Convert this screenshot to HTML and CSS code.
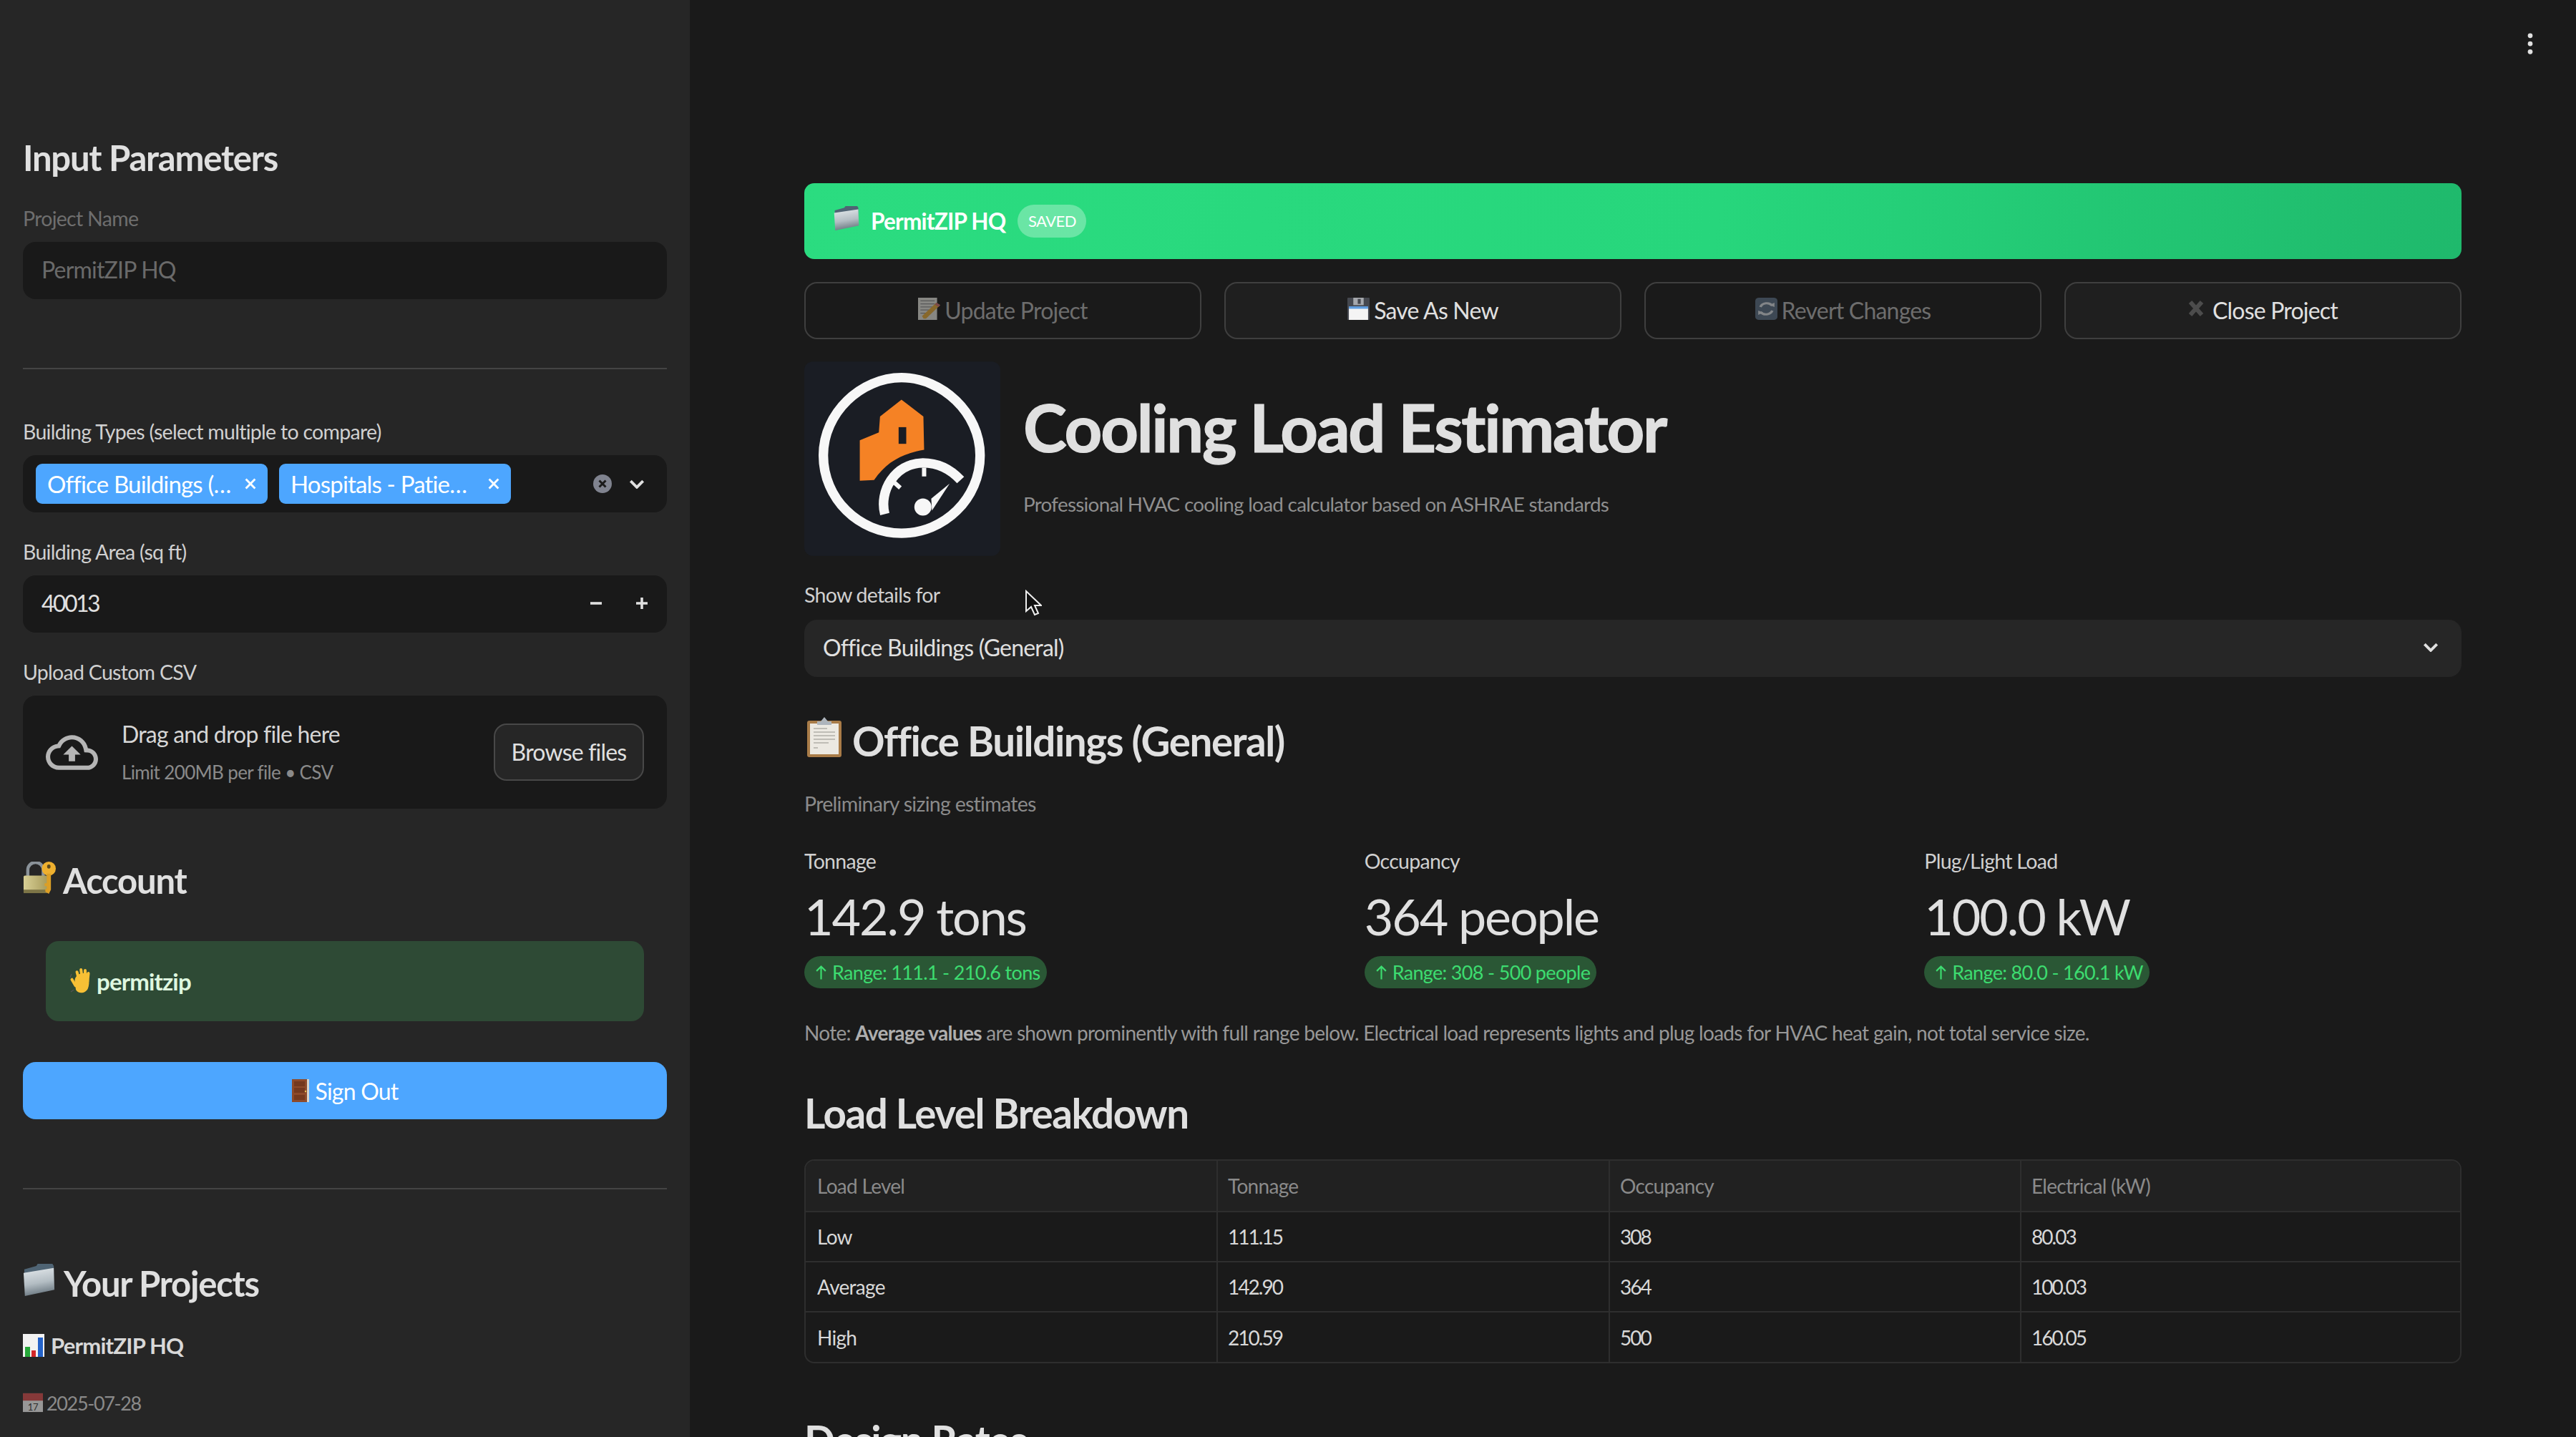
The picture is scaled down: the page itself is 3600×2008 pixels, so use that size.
FILE: index.html
```html
<!DOCTYPE html>
<html lang="en">
<head>
    <meta charset="UTF-8">
    <title>Cooling Load Estimator</title>
    <link rel="stylesheet" href="styles.css">
</head>
<body>
    <!-- emoji drawings -->
    <svg class="defs" width="0" height="0">
        <linearGradient id="folder-face" x1="0" y1="0" x2="0.2" y2="1">
            <stop offset="0" stop-color="#e4e9ec"/>
            <stop offset="0.6" stop-color="#b3bdc3"/>
            <stop offset="1" stop-color="#6f7c85"/>
        </linearGradient>
        <linearGradient id="lock-body" x1="0" y1="0" x2="1" y2="0">
            <stop offset="0" stop-color="#d8cf95"/>
            <stop offset="1" stop-color="#a89c5c"/>
        </linearGradient>
        <symbol id="e-folder" viewBox="0 0 48 46" preserveAspectRatio="none">
            <path d="M2 8 L20 3 L22 0 L44 0 L46 3 L46 34 L4 42 Z" fill="#4f6474"/>
            <path d="M1 13 L46 6 L47 37 L3 46 Z" fill="url(#folder-face)"/>
        </symbol>
        <symbol id="e-lock" viewBox="0 0 48 46" preserveAspectRatio="none">
            <path d="M7 22 V12 A11 11 0 0 1 29 12 V22" fill="none" stroke="#8a9299" stroke-width="4.5"/>
            <rect x="1" y="20" width="34" height="25" rx="2" fill="url(#lock-body)"/>
            <rect x="1" y="40" width="34" height="5" fill="#7d7547"/>
            <circle cx="37" cy="10" r="10" fill="#eeb02f"/>
            <ellipse cx="37" cy="7" rx="2.5" ry="3" fill="#5e4a1c"/>
            <path d="M34 17 H40 V40 L37 46 L32 43 V39 H34 V35 H31 V31 H34 Z" fill="#dc9f26"/>
        </symbol>
        <symbol id="e-wave" viewBox="0 0 32 36">
            <g fill="#f7c035">
                <path d="M8 22 C6 14 10 10 14 8 L24 6 C27 10 29 20 26 28 C23 35 13 37 9 30 Z"/>
                <rect x="10" y="3" width="4" height="16" rx="2" transform="rotate(-14 12 11)"/>
                <rect x="15" y="0" width="4" height="16" rx="2" transform="rotate(-8 17 8)"/>
                <rect x="20" y="1" width="4" height="16" rx="2"/>
                <rect x="24" y="5" width="4" height="15" rx="2" transform="rotate(6 26 12)"/>
                <rect x="4" y="13" width="4" height="14" rx="2" transform="rotate(-30 6 20)"/>
            </g>
            <path d="M3 8 L1 13 M6 30 L2 33" stroke="#555" stroke-width="1.2" fill="none"/>
        </symbol>
        <symbol id="e-door" viewBox="0 0 24 32" preserveAspectRatio="none">
            <rect x="0" y="0" width="24" height="32" fill="#8d4a2a"/>
            <rect x="21" y="0" width="3" height="32" fill="#d9d4c8"/>
            <rect x="3" y="3" width="15" height="7" fill="#74391e"/>
            <rect x="3" y="12" width="15" height="7" fill="#74391e"/>
            <rect x="3" y="22" width="15" height="7" fill="#74391e"/>
            <circle cx="19" cy="17" r="1.2" fill="#e6c25a"/>
        </symbol>
        <symbol id="e-chart" viewBox="0 0 30 32" preserveAspectRatio="none">
            <rect width="30" height="32" fill="#f2f2f2"/>
            <rect x="3" y="18" width="7" height="14" fill="#27a83a"/>
            <rect x="12" y="23" width="6" height="9" fill="#d3272a"/>
            <rect x="21" y="5" width="7" height="27" fill="#2463c9"/>
        </symbol>
        <symbol id="e-memo" viewBox="0 0 28 36" preserveAspectRatio="none">
            <rect x="0" y="0" width="24" height="36" fill="#e0e0da"/>
            <path d="M3 5 H21 M3 10 H21 M3 15 H21 M3 20 H14 M3 25 H10" stroke="#8c8c8c" stroke-width="1.4"/>
            <path d="M7 34 L5 30 L23 8 L28 12 L10 34 Z" fill="#e2a83a"/>
            <path d="M23 8 L28 12 L26 15 L21 11 Z" fill="#c96f6f"/>
        </symbol>
        <symbol id="e-floppy" viewBox="0 0 30 36" preserveAspectRatio="none">
            <rect width="30" height="36" rx="1" fill="#45484f"/>
            <rect x="8" y="0" width="14" height="12" fill="#a5a8ad"/>
            <rect x="14" y="2" width="4" height="8" fill="#45484f"/>
            <rect x="2" y="16" width="26" height="20" fill="#f4f4f4"/>
            <rect x="2" y="14" width="26" height="4" fill="#5f9de0"/>
        </symbol>
        <symbol id="e-refresh" viewBox="0 0 30 36" preserveAspectRatio="none">
            <rect width="30" height="36" rx="5" fill="#5b6f85"/>
            <path d="M23 13 A9 9 0 0 0 7 15" fill="none" stroke="#d8dde2" stroke-width="3.5"/>
            <path d="M7 23 A9 9 0 0 0 23 21" fill="none" stroke="#d8dde2" stroke-width="3.5"/>
            <path d="M19 12 L26 15 L26 8 Z M11 24 L4 21 L4 28 Z" fill="#d8dde2"/>
        </symbol>
        <symbol id="e-cross" viewBox="0 0 22 22">
            <path d="M3 2 L19 20 M19 2 L3 20" stroke="#4c4c4c" stroke-width="6"/>
        </symbol>
        <symbol id="e-clip" viewBox="0 0 48 56">
            <rect x="0" y="5" width="48" height="51" rx="3" fill="#a97c48"/>
            <rect x="4" y="9" width="40" height="43" fill="#ece9e2"/>
            <path d="M9 16 H28 M9 21 H39 M9 26 H39 M9 31 H39 M9 36 H30 M9 43 H15" stroke="#b0aea8" stroke-width="1.5"/>
            <path d="M24 0 L29 6 H34 V11 H14 V6 H19 Z" fill="#aeb5bc"/>
        </symbol>
    </svg>

    <aside class="sidebar">
        <h3 class="side-title first">Input Parameters</h3>

        <label class="field-label muted">Project Name</label>
        <div class="input disabled">PermitZIP HQ</div>

        <hr class="side-rule top-rule">

        <label class="field-label rule-next">Building Types (select multiple to compare)</label>
        <div class="input multi">
            <span class="tag"><span class="tag-text">Office Buildings (…</span><svg class="tag-x" viewBox="0 0 10 10"><path d="M1 1 L9 9 M9 1 L1 9"/></svg></span>
            <span class="tag"><span class="tag-text">Hospitals - Patie…</span><svg class="tag-x" viewBox="0 0 10 10"><path d="M1 1 L9 9 M9 1 L1 9"/></svg></span>
            <svg class="clear-icon" viewBox="0 0 26 26"><circle cx="13" cy="13" r="13" fill="#80838f"/><path d="M8.5 8.5 L17.5 17.5 M17.5 8.5 L8.5 17.5" stroke="#1a1a1a" stroke-width="3"/></svg>
            <svg class="chevron" viewBox="0 0 20 12"><path d="M2 2 L10 10 L18 2"/></svg>
        </div>

        <label class="field-label">Building Area (sq ft)</label>
        <div class="input number">
            <span class="number-value">40013</span>
            <svg class="step-icon" viewBox="0 0 18 18"><path d="M1 9 H17"/></svg>
            <svg class="step-icon" viewBox="0 0 18 18"><path d="M1 9 H17 M9 1 V17"/></svg>
        </div>

        <label class="field-label">Upload Custom CSV</label>
        <div class="dropzone">
            <svg class="cloud" viewBox="0 0 24 24"><path d="M19.35 10.04C18.67 6.59 15.64 4 12 4 9.11 4 6.6 5.64 5.35 8.04 2.34 8.36 0 10.91 0 14c0 3.31 2.69 6 6 6h13c2.76 0 5-2.24 5-5 0-2.64-2.05-4.78-4.65-4.96zM19 18H6c-2.21 0-4-1.79-4-4 0-2.05 1.53-3.76 3.56-3.97l1.07-.11.5-.95C8.08 7.14 9.94 6 12 6c2.62 0 4.88 1.86 5.39 4.43l.3 1.5 1.53.11c1.56.1 2.78 1.41 2.78 2.96 0 1.65-1.35 3-3 3zM8 13h2.55v3h2.9v-3H16l-4-4z"/></svg>
            <div class="drop-text">
                <div class="drop-main">Drag and drop file here</div>
                <div class="drop-sub">Limit 200MB per file • CSV</div>
            </div>
            <div class="browse">Browse files</div>
        </div>

        <h3 class="side-title account"><svg class="emoji em-lock"><use href="#e-lock"/></svg>Account</h3>

        <div class="user-box"><svg class="emoji em-wave"><use href="#e-wave"/></svg>permitzip</div>

        <div class="signout"><svg class="emoji em-door"><use href="#e-door"/></svg>Sign Out</div>

        <hr class="side-rule bottom-rule">

        <h3 class="side-title projects"><svg class="emoji em-folder"><use href="#e-folder"/></svg>Your Projects</h3>
        <div class="project-name"><svg class="emoji em-chart"><use href="#e-chart"/></svg>PermitZIP HQ</div>
        <div class="project-date">
            <svg class="emoji em-cal" viewBox="0 0 30 28">
                <rect width="30" height="28" fill="#f4f4f4"/>
                <rect width="30" height="11" fill="#d44a4a"/>
                <text x="15" y="25.5" text-anchor="middle" font-family="Lato" font-size="14" fill="#333">17</text>
            </svg>
            2025-07-28
        </div>
    </aside>

    <main class="main">
        <svg class="kebab" viewBox="0 0 8 32"><circle cx="4" cy="4" r="3.6"/><circle cx="4" cy="16" r="3.6"/><circle cx="4" cy="28" r="3.6"/></svg>
        <svg class="cursor" viewBox="0 0 24 37"><path d="M2 2 L2 30 L9 24 L14 35 L19 33 L14 22 L23 22 Z" fill="#111" stroke="#eee" stroke-width="2"/></svg>

        <div class="banner">
            <svg class="emoji em-bfolder"><use href="#e-folder"/></svg>
            <span class="banner-name">PermitZIP HQ</span>
            <span class="saved">SAVED</span>
        </div>

        <div class="actions">
            <div class="btn off"><svg class="emoji em-btn"><use href="#e-memo"/></svg>Update Project</div>
            <div class="btn"><svg class="emoji em-btn"><use href="#e-floppy"/></svg>Save As New</div>
            <div class="btn off"><svg class="emoji em-btn"><use href="#e-refresh"/></svg>Revert Changes</div>
            <div class="btn"><svg class="emoji em-cross"><use href="#e-cross"/></svg>Close Project</div>
        </div>

        <header class="header">
            <svg class="logo" viewBox="12 15 823 815">
                <rect x="12" y="15" width="823" height="815" rx="36" fill="#1a1d24"/>
                <path d="M420 82 C590 82 750 230 750 408 C750 590 600 735 420 735 C240 735 92 590 92 408 C92 230 250 82 420 82 Z" fill="none" stroke="#f7f7f7" stroke-width="40"/>
                <path d="M245 345 L325 312 L330 245 L420 175 L512 245 L515 385 C430 400 360 430 305 512 L245 515 Z" fill="#f58225"/>
                <rect x="408" y="290" width="32" height="70" fill="#1a1d24"/>
                <path d="M350 655 C325 560 390 442 510 440 C570 440 625 465 668 512" fill="none" stroke="#f7f7f7" stroke-width="40"/>
                <path d="M515 460 V497 M385 518 L415 545" stroke="#f7f7f7" stroke-width="18"/>
                <path d="M545 590 L622 527 L548 640 Z" fill="#f7f7f7"/>
                <circle cx="510" cy="625" r="36" fill="#f7f7f7"/>
            </svg>
            <div class="header-text">
                <h1 class="title">Cooling Load Estimator</h1>
                <p class="subtitle">Professional HVAC cooling load calculator based on ASHRAE standards</p>
            </div>
        </header>

        <label class="details-label">Show details for</label>
        <div class="select">
            <span>Office Buildings (General)</span>
            <svg class="chevron" viewBox="0 0 20 12"><path d="M2 2 L10 10 L18 2"/></svg>
        </div>

        <h2 class="section-title office"><svg class="emoji em-clip"><use href="#e-clip"/></svg>Office Buildings (General)</h2>
        <p class="caption">Preliminary sizing estimates</p>

        <div class="metrics">
            <div class="metric">
                <div class="metric-label">Tonnage</div>
                <div class="metric-value">142.9 tons</div>
                <div class="delta"><svg class="delta-arrow" viewBox="0 0 16 20"><path d="M8 19 V2 M2 8 L8 2 L14 8"/></svg>Range: 111.1 - 210.6 tons</div>
            </div>
            <div class="metric">
                <div class="metric-label">Occupancy</div>
                <div class="metric-value">364 people</div>
                <div class="delta"><svg class="delta-arrow" viewBox="0 0 16 20"><path d="M8 19 V2 M2 8 L8 2 L14 8"/></svg>Range: 308 - 500 people</div>
            </div>
            <div class="metric">
                <div class="metric-label">Plug/Light Load</div>
                <div class="metric-value">100.0 kW</div>
                <div class="delta"><svg class="delta-arrow" viewBox="0 0 16 20"><path d="M8 19 V2 M2 8 L8 2 L14 8"/></svg>Range: 80.0 - 160.1 kW</div>
            </div>
        </div>

        <p class="note">Note: <strong>Average values</strong> are shown prominently with full range below. Electrical load represents lights and plug loads for HVAC heat gain, not total service size.</p>

        <h2 class="section-title load">Load Level Breakdown</h2>
        <div class="table-wrap">
            <table class="load-table">
                <thead>
                    <tr><th>Load Level</th><th>Tonnage</th><th>Occupancy</th><th>Electrical (kW)</th></tr>
                </thead>
                <tbody>
                    <tr><td>Low</td><td class="num">111.15</td><td class="num">308</td><td class="num">80.03</td></tr>
                    <tr><td>Average</td><td class="num">142.90</td><td class="num">364</td><td class="num">100.03</td></tr>
                    <tr><td>High</td><td class="num">210.59</td><td class="num">500</td><td class="num">160.05</td></tr>
                </tbody>
            </table>
        </div>

        <h2 class="section-title design">Design Rates</h2>
    </main>
</body>
</html>
```

FILE: styles.css
```css
* { box-sizing: border-box; letter-spacing: -0.025em; }
html, body { margin: 0; height: 2008px; overflow: hidden; }
body { display: flex; background: #1a1a1a; color: #e0e0e0; font-family: Lato, "Noto Sans", sans-serif; font-size: 32px; }
.defs { position: absolute; }
.emoji { display: inline-block; flex: none; }
h1, h2, h3, p { margin: 0; font-weight: 700; }
p { font-weight: 400; }
label { display: block; }

/* sidebar */
.sidebar { width: 964px; flex: none; height: 2008px; overflow: hidden; padding: 190px 32px 0; background: #262626; }
.side-title { height: 60px; line-height: 60px; font-size: 49px; display: flex; align-items: center; color: #e0e0e0; }
.field-label { height: 40px; line-height: 40px; margin-top: 35px; margin-bottom: 13px; font-size: 28.5px; color: #d0d0d0; }
.field-label.muted { color: #6e6e6e; }
.field-label.rule-next { margin-top: 67px; }
.input { height: 80px; display: flex; align-items: center; background: #191919; border-radius: 18px; padding: 0 26px 3px; }
.input.disabled { color: #6a6a6a; }
.side-rule { border: 0; height: 2px; margin: 0; background: #444; }
.top-rule { margin-top: 96px; }
.bottom-rule { margin-top: 96px; }

.multi { padding: 0 18px; gap: 16px; }
.tag { width: 324px; height: 56px; display: flex; align-items: center; justify-content: space-between; padding: 0 16px; background: #4da6ff; border-radius: 9px; color: #fff; font-size: 33px; }
.tag-x { width: 16px; height: 16px; fill: none; stroke: #fff; stroke-width: 1.8; }
.clear-icon { width: 26px; height: 26px; margin-left: auto; }
.chevron { width: 22px; height: 13px; fill: none; stroke: #e0e0e0; stroke-width: 3.6; }
.multi .chevron { margin: 0 13px 0 8px; }

.number-value { margin-right: auto; letter-spacing: -0.08em; }
.step-icon { width: 18px; height: 18px; margin-left: 46px; fill: none; stroke: #e0e0e0; stroke-width: 3.6; }

.dropzone { height: 158px; display: flex; align-items: center; padding: 0 32px; background: #191919; border-radius: 18px; }
.cloud { width: 73px; height: 73px; fill: #b5b5b5; }
.drop-text { margin-left: 33px; flex: 1; }
.drop-main { height: 46px; line-height: 46px; font-size: 32px; color: #d6d6d6; }
.drop-sub { height: 40px; line-height: 40px; margin-top: 10px; font-size: 26px; color: #8a8a8a; }
.browse { width: 210px; height: 80px; line-height: 76px; text-align: center; background: #262626; border: 2px solid #484848; border-radius: 18px; font-size: 32px; color: #e0e0e0; }

.account { margin-top: 70px; }
.em-lock { width: 47px; height: 45px; margin-right: 9px; margin-top: -8px; }
.user-box { height: 112px; margin: 55px 32px 0; padding-left: 33px; display: flex; align-items: center; background: #2e4a35; border-radius: 18px; color: #dff7e0; font-weight: 700; font-size: 33px; }
.em-wave { width: 32px; height: 38px; margin-right: 6px; }
.signout { height: 80px; margin-top: 57px; display: flex; align-items: center; justify-content: center; background: #4da6ff; border-radius: 18px; color: #fff; font-size: 32px; }
.em-door { width: 24px; height: 32px; margin-right: 9px; }

.projects { margin-top: 101px; }
.em-folder { width: 45px; height: 45px; margin-right: 12px; margin-top: -10px; }
.project-name { height: 40px; margin-top: 37px; display: flex; align-items: center; font-weight: 700; font-size: 31px; color: #d8d8d8; }
.em-chart { width: 30px; height: 32px; margin-right: 9px; }
.project-date { height: 40px; margin-top: 40px; display: flex; align-items: center; font-size: 27px; letter-spacing: -0.05em; color: #8a8a8a; }
.em-cal { width: 28px; height: 28px; margin-right: 5px; opacity: .55; }

/* main */
.main { flex: 1; position: relative; height: 2008px; overflow: hidden; padding: 256px 160px 0; }
.kebab { position: absolute; top: 46px; right: 60px; width: 8px; height: 30px; fill: #e0e0e0; }
.cursor { position: absolute; left: 468px; top: 824px; width: 24px; height: 37px; }

.banner { height: 106px; display: flex; align-items: center; padding-left: 41px; background: linear-gradient(100deg, #2bdc80 0%, #27d67c 55%, #1fb96c 100%); border-radius: 14px; }
.em-bfolder { width: 36px; height: 34px; margin-top: -8px; }
.banner-name { margin-left: 16px; font-weight: 700; font-size: 31.5px; color: #fff; }
.saved { width: 96px; height: 46px; line-height: 46px; margin-left: 17px; text-align: center; background: rgba(255, 255, 255, .3); border-radius: 23px; font-size: 22px; color: #fff; }

.actions { display: grid; grid-template-columns: repeat(4, 1fr); gap: 32px; margin-top: 32px; }
.btn { height: 80px; padding-bottom: 2px; display: flex; align-items: center; justify-content: center; background: #1f1f1f; border: 2px solid #3f3f3f; border-radius: 18px; font-size: 32px; color: #e0e0e0; }
.btn.off { background: #1a1a1a; color: #6d6d6d; }
.btn.off .emoji { opacity: .55; }
.em-btn { width: 31px; height: 31px; margin-right: 6px; margin-top: -4px; }
.em-cross { width: 22px; height: 22px; margin-right: 12px; margin-top: -4px; }

.header { display: flex; margin-top: 31px; height: 272px; }
.logo { width: 274px; height: 272px; flex: none; }
.header-text { margin-left: 32px; padding-top: 32px; }
.title { height: 120px; line-height: 120px; font-size: 92px; color: #e0e0e0; -webkit-text-stroke: 1.2px #e0e0e0; }
.subtitle { height: 40px; line-height: 40px; margin-top: 28px; font-size: 27.8px; color: #8f8f8f; }

.details-label { height: 40px; line-height: 40px; margin-top: 34px; font-size: 28.5px; color: #d0d0d0; }
.select { height: 80px; margin-top: 15px; display: flex; align-items: center; justify-content: space-between; padding: 0 32px 3px 26px; background: #262626; border-radius: 18px; }

.section-title { height: 70px; line-height: 70px; font-size: 56.5px; display: flex; align-items: center; color: #e0e0e0; }
.office { margin-top: 54px; }
.em-clip { width: 50px; height: 56px; margin: -10px 14px 0 3px; }
.load { margin-top: 57px; }
.design { margin-top: 72px; }
.caption { height: 40px; line-height: 40px; margin-top: 33px; font-size: 28.5px; color: #8a8a8a; }

.metrics { display: grid; grid-template-columns: repeat(3, 1fr); gap: 32px; margin-top: 40px; }
.metric-label { height: 40px; line-height: 40px; font-size: 28.5px; color: #d0d0d0; }
.metric-value { height: 90px; line-height: 86px; margin-top: 14px; font-size: 70px; letter-spacing: -0.03em; color: #e0e0e0; }
.delta { display: inline-flex; align-items: center; height: 45px; margin-top: 9px; padding: 0 9px 0 15px; background: #2a5735; border-radius: 23px; font-size: 27px; color: #3ddc70; }
.delta-arrow { width: 17px; height: 22px; margin-right: 7px; fill: none; stroke: #3ddc70; stroke-width: 2; }

.note { height: 40px; line-height: 40px; margin-top: 42px; font-size: 28px; color: #979797; }
.note strong { color: #aeaeae; }

.table-wrap { margin-top: 30px; border: 2px solid #2e2e2e; border-radius: 14px; overflow: hidden; }
.load-table { width: 100%; border-collapse: collapse; table-layout: fixed; font-size: 28px; }
.load-table th { height: 71px; padding: 0 14px; background: #212121; font-weight: 400; text-align: left; color: #8a8a8a; border-right: 2px solid #2e2e2e; border-bottom: 2px solid #2e2e2e; }
.load-table td { height: 70px; padding: 0 14px; color: #d8d8d8; border-right: 2px solid #2e2e2e; border-bottom: 2px solid #2e2e2e; }
.load-table th:first-child, .load-table td:first-child { padding-left: 16px; }
.load-table .num { letter-spacing: -0.07em; }
.load-table tr:last-child td { border-bottom: 0; }
.load-table th:last-child, .load-table td:last-child { border-right: 0; }
.load-table th:nth-child(1) { width: 575px; }
.load-table th:nth-child(2) { width: 548px; }
.load-table th:nth-child(3) { width: 575px; }
```
